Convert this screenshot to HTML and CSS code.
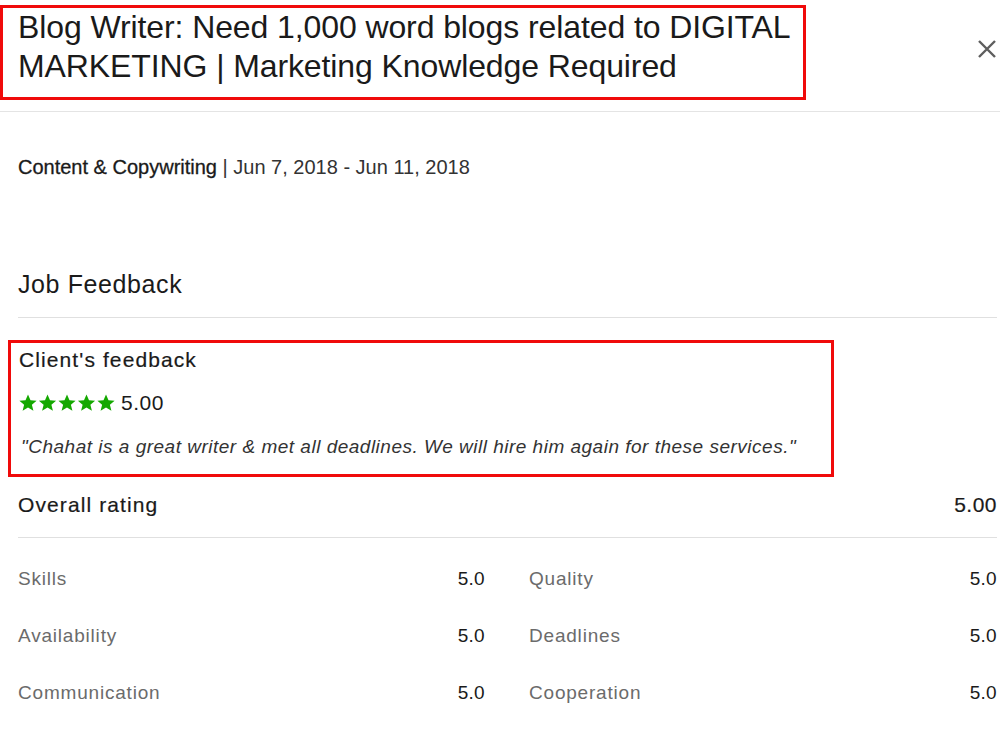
FILE: index.html
```html
<!DOCTYPE html>
<html>
<head>
<meta charset="utf-8">
<title>Job Feedback</title>
<link rel="stylesheet" href="styles.css">
</head>
<body>

<div class="header">
	<div class="mark title-mark">
		<h1 class="title">Blog Writer: Need 1,000 word blogs related to DIGITAL MARKETING | Marketing Knowledge Required</h1>
	</div>
	<button class="close" aria-label="Close">
		<svg width="20" height="20" viewBox="0 0 20 20"><path d="M2 2 L18 18 M18 2 L2 18" stroke="#5e5e5e" stroke-width="2.4" fill="none"/></svg>
	</button>
</div>

<div class="content">
	<p class="meta"><strong>Content &amp; Copywriting</strong> | Jun 7, 2018 - Jun 11, 2018</p>

	<h2 class="section-title">Job Feedback</h2>

	<div class="mark feedback-mark">
		<h3 class="sub-title">Client's feedback</h3>
		<div class="rating">
			<span class="stars">
				<svg width="97" height="18" viewBox="0 0 97 18">
					<defs>
						<path id="star" d="M9 0.6 L11.5 6.3 L17.6 6.8 L12.9 10.8 L14.4 16.8 L9 13.6 L3.6 16.8 L5.1 10.8 L0.4 6.8 L6.5 6.3 Z"/>
					</defs>
					<use href="#star" x="0" fill="#14a800"/>
					<use href="#star" x="19.5" fill="#14a800"/>
					<use href="#star" x="39" fill="#14a800"/>
					<use href="#star" x="58.5" fill="#14a800"/>
					<use href="#star" x="78" fill="#14a800"/>
				</svg>
			</span>
			<span class="rating-value">5.00</span>
		</div>
		<p class="quote">"Chahat is a great writer &amp; met all deadlines. We will hire him again for these services."</p>
	</div>

	<div class="overall">
		<span>Overall rating</span>
		<span>5.00</span>
	</div>

	<div class="scores">
		<div class="score"><span class="label">Skills</span><span class="value">5.0</span></div>
		<div class="score"><span class="label">Quality</span><span class="value">5.0</span></div>
		<div class="score"><span class="label">Availability</span><span class="value">5.0</span></div>
		<div class="score"><span class="label">Deadlines</span><span class="value">5.0</span></div>
		<div class="score"><span class="label">Communication</span><span class="value">5.0</span></div>
		<div class="score"><span class="label">Cooperation</span><span class="value">5.0</span></div>
	</div>
</div>

</body>
</html>
```

FILE: styles.css
```css
* {
	box-sizing: border-box;
}

body {
	margin: 0;
	background: #fff;
	color: #222;
	font-family: "Liberation Sans", Arial, sans-serif;
	overflow: hidden;
}

h1, h2, h3, p {
	margin: 0;
	font-weight: normal;
}

/* red highlight frames */
.mark {
	border: 3px solid #f00a0a;
}

.header {
	display: flex;
	align-items: flex-start;
	justify-content: space-between;
	height: 112px;
	padding-top: 5px;
	border-bottom: 1px solid #e4e4e4;
}

.title-mark {
	width: 806px;
	height: 95px;
	padding: 0 8px 0 15px;
}

.title {
	font-size: 32px;
	line-height: 39px;
	letter-spacing: -0.1px;
	color: #1a1a1a;
}

.close {
	margin: 34px 3px 0 0;
	padding: 0;
	border: 0;
	background: none;
	width: 20px;
	height: 20px;
}

.content {
	padding: 0 3px 0 18px;
}

.meta {
	margin-top: 42px;
	font-size: 20px;
	line-height: 26px;
	color: #333;
}

.meta strong {
	font-weight: normal;
	color: #1a1a1a;
	-webkit-text-stroke: 0.3px #1a1a1a;
}

.section-title {
	margin-top: 89px;
	font-size: 25px;
	line-height: 30px;
	letter-spacing: 0.6px;
	color: #1a1a1a;
	padding-bottom: 18px;
	border-bottom: 1px solid #e0e0e0;
}

.feedback-mark {
	margin: 22px 0 0 -10px;
	width: 826px;
	height: 137px;
	padding: 4px 10px 0 8px;
}

.sub-title {
	font-size: 21px;
	line-height: 26px;
	letter-spacing: 1.1px;
	color: #1a1a1a;
	-webkit-text-stroke: 0.2px #1a1a1a;
}

.rating {
	display: flex;
	align-items: center;
	gap: 5px;
	margin-top: 18px;
}

.stars svg {
	display: block;
}

.rating-value {
	font-size: 21px;
	line-height: 24px;
	letter-spacing: 0.5px;
	color: #1a1a1a;
}

.quote {
	margin-top: 20px;
	padding-left: 2px;
	font-size: 19px;
	line-height: 24px;
	font-style: italic;
	letter-spacing: 0.5px;
	color: #333;
}

.overall {
	display: flex;
	justify-content: space-between;
	margin-top: 15px;
	padding-bottom: 19px;
	border-bottom: 1px solid #e0e0e0;
	font-size: 21px;
	line-height: 26px;
	letter-spacing: 1.1px;
	color: #1a1a1a;
	-webkit-text-stroke: 0.2px #1a1a1a;
}

.overall span:last-child {
	letter-spacing: 0.5px;
}

.scores {
	display: grid;
	grid-template-columns: 467px 1fr;
	column-gap: 44px;
	row-gap: 33px;
	padding-top: 29px;
}

.score {
	display: flex;
	justify-content: space-between;
	font-size: 19px;
	line-height: 24px;
	letter-spacing: 0.8px;
}

.label {
	color: #6b6b6b;
}

.value {
	color: #1a1a1a;
	letter-spacing: 0.3px;
}
```
